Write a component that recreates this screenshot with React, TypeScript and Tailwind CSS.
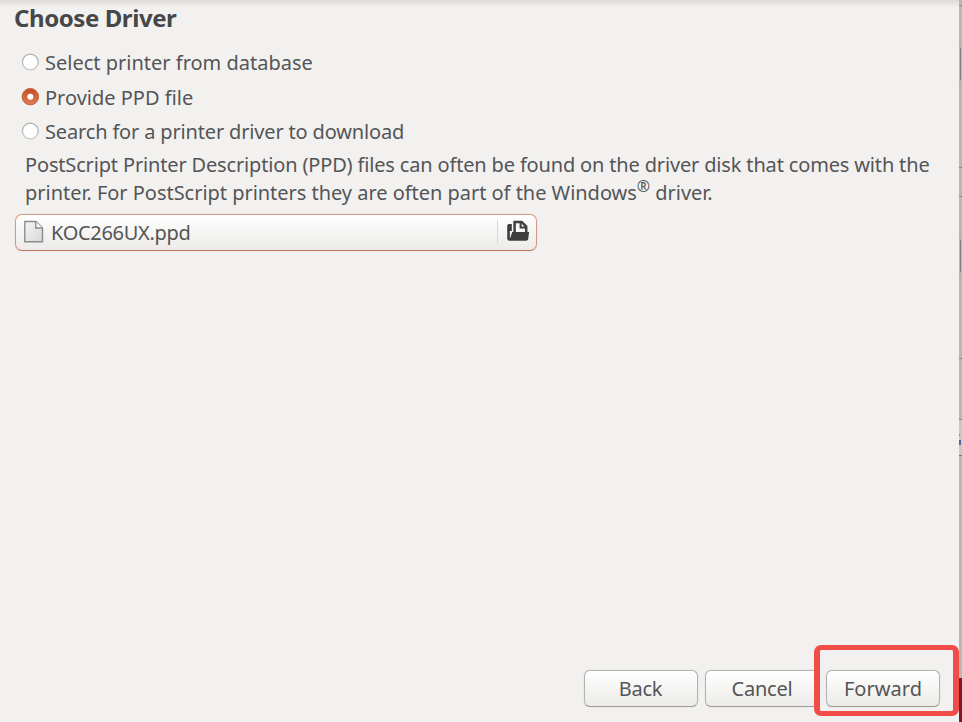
import type { ReactNode } from "react";

function Line({ children, className = "" }: { children: ReactNode; className?: string }) {
  return <span className={`block w-max whitespace-nowrap ${className}`}>{children}</span>;
}

function Radio({ checked = false }: { checked?: boolean }) {
  return (
    <svg width="20" height="20" viewBox="0 0 20 20" className="shrink-0">
      <defs>
        <linearGradient id="on" x1="0" y1="0" x2="0" y2="1">
          <stop offset="0" stopColor="#c64d20" />
          <stop offset="1" stopColor="#dd7f59" />
        </linearGradient>
        <linearGradient id="ring" x1="0" y1="0" x2="0" y2="1">
          <stop offset="0" stopColor="#adaca9" />
          <stop offset="1" stopColor="#cbc9c6" />
        </linearGradient>
      </defs>
      {checked ? (
        <>
          <circle cx="10.3" cy="9.7" r="8.2" fill="url(#on)" stroke="#c4623e" strokeWidth="1" />
          <circle cx="10.3" cy="9.7" r="3" fill="#fff" />
        </>
      ) : (
        <circle cx="10.3" cy="10" r="7.9" fill="#fefefe" stroke="url(#ring)" strokeWidth="1.3" />
      )}
    </svg>
  );
}

function Option({ label, checked, spacing }: { label: string; checked?: boolean; spacing: string }) {
  return (
    <label className="flex h-[34.5px] items-center gap-[5px]">
      <Radio checked={checked} />
      <Line className={`pt-[2px] ${spacing}`}>{label}</Line>
    </label>
  );
}

function Button({ children, spacing }: { children: string; spacing: string }) {
  return (
    <button className="flex h-[37px] w-[114px] items-center justify-center rounded-[6px] border border-[#b3b2af] border-b-[#9e9d9a] bg-linear-to-b from-white to-[#ecebe9] shadow-[0_0_1px_#bbb]">
      <Line className={spacing}>{children}</Line>
    </button>
  );
}

function FileIcon() {
  return (
    <svg width="20" height="24" viewBox="0 0 20 24" className="shrink-0">
      <defs>
        <linearGradient id="paper" x1="0" y1="0" x2="1" y2="1">
          <stop offset="0" stopColor="#f6f6f6" />
          <stop offset="1" stopColor="#d7d7d7" />
        </linearGradient>
      </defs>
      <path d="M.8 1.5h11.2l6.5 6.5v13.8H.8z" fill="url(#paper)" stroke="#8c8c8c" strokeWidth="1.4" />
      <path d="M11.8 1.5V8h6.7" fill="#fafafa" stroke="#8c8c8c" strokeWidth="1.4" />
    </svg>
  );
}

function OpenIcon() {
  return (
    <svg width="24" height="24" viewBox="0 0 24 24" className="block shrink-0">
      <path d="M8.6 13V1.9h7l4.6 4.7V13" fill="#fafafa" stroke="#3f3f3f" strokeWidth="2.5" />
      <path d="M14.6 2v5.6h6" fill="none" stroke="#3f3f3f" strokeWidth="2" />
      <path d="M5.8 4H3Q1.2 4 1.2 5.8v12.7q0 2.3 2.3 2.3h16.7q1.8 0 2-1.8l.9-7H6.2L3.8 16V11h2z" fill="#3f3f3f" />
      <path d="M5.7 11.8L4.1 17.5" stroke="#eee" strokeWidth="1" />
    </svg>
  );
}

export default function App() {
  return (
    <div className="relative flex h-[722px] w-[962px] overflow-hidden bg-[#f2f1ef] font-['Noto_Sans','Open_Sans',sans-serif] text-[20px] leading-[28px] text-[#545557]">
      <main className="flex w-[959px] flex-col bg-linear-to-b from-[#dddcda] via-[#f2f1ef] via-[1%] to-[#f2f1ef]">
        <h1 className="ml-[14px] mt-[3px] text-[24px] font-bold leading-[30px] text-[#464748]">
          <Line className="tracking-[-0.42px]">Choose Driver</Line>
        </h1>
        <div className="ml-[20px] mt-[12px] flex flex-col">
          <Option label="Select printer from database" spacing="tracking-[0px]" />
          <Option label="Provide PPD file" checked spacing="tracking-[0px]" />
          <Option label="Search for a printer driver to download" spacing="tracking-[-0.16px]" />
        </div>
        <p className="ml-[25px] mt-[2px] leading-[28px]">
          <Line className="tracking-[-0.16px]">PostScript Printer Description (PPD) files can often be found on the driver disk that comes with the</Line>
          <Line className="tracking-[-0.03px]">
            printer. For PostScript printers they are often part of the Windows<sup className="inline-block h-4 text-[16px] leading-none">®</sup> driver.
          </Line>
        </p>
        <div className="ml-[15px] mt-[7px] flex h-[37px] w-[522px] items-center rounded-[7px] border border-[#d49c86] border-b-[#bd785f] bg-linear-to-b from-white to-[#ecebe9] pl-[8px] pr-[6px] shadow-[0_0_1px_#dfac98]">
          <FileIcon />
          <Line className="ml-[7px] pt-[2px] tracking-[-0.3px]">KOC266UX.ppd</Line>
          <span className="ml-auto h-[24px] w-px bg-[#d9d8d6]" />
          <span className="ml-[8px]"><OpenIcon /></span>
        </div>
        <footer className="mb-[15px] mt-auto flex justify-end gap-[7px] pr-[19px]">
          <Button spacing="tracking-[-0.2px] pr-px">Back</Button>
          <Button spacing="tracking-[-0.2px]">Cancel</Button>
          <Button spacing="tracking-[0.05px]">Forward</Button>
        </footer>
      </main>
      <aside className="flex w-[3px] flex-col bg-[#b9b8b6]">
        <i className="h-[5px]" /><i className="h-px bg-[#8d8d8b]" />
        <i className="mt-[41px] h-[34px] w-[2px] rounded-r-[2px] border-r border-[#7f8284]" />
        <i className="mt-[86px] h-px bg-[#888]" />
        <i className="mt-[28px] h-px bg-[#888]" />
        <i className="mt-[42px] h-[34px] w-[2px] rounded-r-[2px] border-r border-[#7f8284]" />
        <i className="mt-[85px] h-px bg-[#888]" />
        <i className="mt-[60px] h-px bg-[#888]" />
        <i className="h-[35px] bg-[#c9c8c7] pt-[14px]"><b className="block h-[2px] w-px bg-[#7893ab]" /><b className="mt-[4px] block h-[5px] w-[2px] bg-[#4e6c8c]" /></i>
        <i className="h-px bg-[#777]" />
        <i className="mt-auto h-[44px] bg-[#811725]" />
      </aside>
      <div className="absolute left-[814px] top-[645px] h-[71px] w-[145px] rounded-[7px] border-x-[6px] border-y-[5px] border-[#f24c48]" />
    </div>
  );
}
